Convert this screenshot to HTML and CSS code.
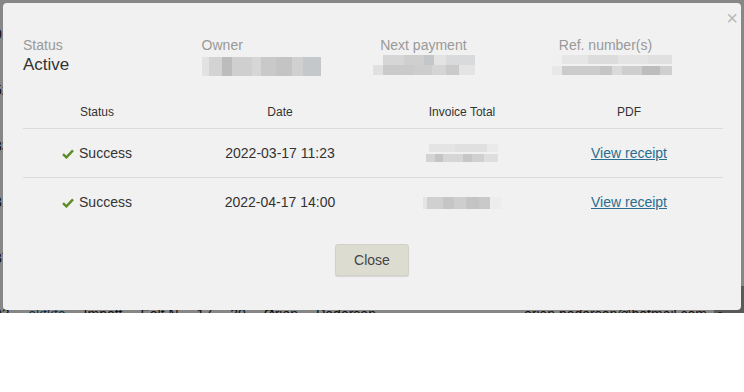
FILE: index.html
```html
<!DOCTYPE html>
<html lang="en">
<head>
<meta charset="UTF-8">
<meta name="viewport" content="width=device-width, initial-scale=1.0">
<title>Subscription payments</title>
<link rel="stylesheet" href="styles.css">
</head>
<body>
    <div class="screen">
        <!-- Page behind the dialog (only its edges show) -->
        <div class="page">
            <table class="bg-table">
                <tr><td class="c-id">01</td><td colspan="9"></td></tr>
                <tr><td class="c-id">52</td><td colspan="9"></td></tr>
                <tr><td class="c-id">33</td><td colspan="9"></td></tr>
                <tr><td class="c-id">31</td><td colspan="9"></td></tr>
                <tr><td class="c-id">37</td><td colspan="9"></td></tr>
                <tr><td class="c-id">03</td><td><a href="#">oktkto</a></td><td>Impott</td><td>Eolt N</td><td>17</td><td>30</td><td>Ørjan</td><td>Pedersen</td><td class="c-mail">orjan.pedersen@hotmail.com</td><td class="c-icon">&#9679;</td></tr>
            </table>
        </div>

        <div class="overlay"></div>

        <!-- Payments dialog -->
        <div class="modal" role="dialog">
            <span class="modal-close">&times;</span>

            <div class="summary">
                <div class="field">
                    <div class="field-label">Status</div>
                    <div class="field-value">Active</div>
                </div>
                <div class="field">
                    <div class="field-label">Owner</div>
                    <div class="field-value"><span class="mask mask-owner"></span></div>
                </div>
                <div class="field">
                    <div class="field-label">Next payment</div>
                    <div class="field-value"><span class="mask mask-next"></span></div>
                </div>
                <div class="field">
                    <div class="field-label">Ref. number(s)</div>
                    <div class="field-value"><span class="mask mask-ref"></span></div>
                </div>
            </div>

            <table class="payments">
                <colgroup>
                    <col class="col-status">
                    <col class="col-date">
                    <col class="col-total">
                    <col class="col-pdf">
                </colgroup>
                <thead>
                    <tr>
                        <th>Status</th>
                        <th>Date</th>
                        <th>Invoice Total</th>
                        <th>PDF</th>
                    </tr>
                </thead>
                <tbody>
                    <tr>
                        <td><svg class="check" width="12" height="10" viewBox="0 0 12 10"><path d="M1 5.2 L4.4 8.4 L11 1.4" fill="none" stroke="#5b8c25" stroke-width="2.4"/></svg>Success</td>
                        <td>2022-03-17 11:23</td>
                        <td><span class="mask mask-amount1"></span></td>
                        <td><a href="#" class="receipt">View receipt</a></td>
                    </tr>
                    <tr>
                        <td><svg class="check" width="12" height="10" viewBox="0 0 12 10"><path d="M1 5.2 L4.4 8.4 L11 1.4" fill="none" stroke="#5b8c25" stroke-width="2.4"/></svg>Success</td>
                        <td>2022-04-17 14:00</td>
                        <td><span class="mask mask-amount2"></span></td>
                        <td><a href="#" class="receipt">View receipt</a></td>
                    </tr>
                </tbody>
            </table>

            <div class="modal-footer">
                <button class="btn">Close</button>
            </div>
        </div>
    </div>
</body>
</html>
```

FILE: styles.css
```css
body {
    margin: 0;
    background-color: #fff;
    font-family: "Liberation Sans", Arial, sans-serif;
}
.screen {
    position: relative;
    height: 313px;
    overflow: hidden;
}

/* page behind the dialog */
.page {
    padding-top: 6px;
    margin-left: -6px;
}
.bg-table {
    border-collapse: collapse;
    font-size: 14px;
    color: #222;
}
.bg-table td {
    height: 56px;
    padding: 0 18px 0 0;
    white-space: nowrap;
}
.bg-table a {
    color: #1f5f8a;
}
.bg-table .c-id {
    width: 20px;
}
.bg-table .c-mail {
    padding-left: 130px;
    padding-right: 7px;
}
.bg-table .c-icon {
    width: 32px;
    background-color: #aaa;
    text-align: center;
}
.overlay {
    position: absolute;
    inset: 0;
    background-color: rgba(0, 0, 0, 0.47);
}

/* dialog */
.modal {
    position: absolute;
    left: 3px;
    top: 3px;
    width: 738px;
    height: 307px;
    box-sizing: border-box;
    padding: 34px 20px 0;
    background-color: #f1f1f1;
    border-radius: 4px;
    color: #333;
}
.modal-close {
    position: absolute;
    top: 5px;
    right: 3px;
    font-size: 20px;
    line-height: 20px;
    color: #b9b9b9;
}
.summary {
    display: grid;
    grid-template-columns: repeat(4, 178.6px);
}
.field-label {
    font-size: 14px;
    line-height: 16px;
    color: #999;
}
.field-value {
    margin-top: 2px;
    height: 20px;
    font-size: 17px;
    line-height: 20px;
    color: #333;
}

/* pixelated placeholders */
.mask {
    display: inline-block;
    vertical-align: top;
}
.mask-owner {
    width: 119px;
    height: 19px;
    margin-top: 2px;
    background: linear-gradient(90deg, #e2e2e2 0 6%, #d3d3d3 6% 17%, #bcbcbc 17% 25%, #cfcfcf 25% 42%, #d6d6d6 42% 50%, #c9c9c9 50% 62%, #c4c4c4 62% 76%, #d0d0d0 76% 85%, #c5c8cb 85% 100%);
}
.mask-next {
    width: 102px;
    height: 20px;
    margin-left: -7px;
    background-image:
        linear-gradient(90deg, #f1f1f1 0 10%, #d6d6d6 10% 30%, #cfcfcf 30% 50%, #c4c7c9 50% 60%, #e3e3e3 60% 72%, #d8dadc 72% 100%),
        linear-gradient(90deg, #e0e0e0 0 10%, #cacaca 10% 40%, #cdcdcd 40% 58%, #d5d5d5 58% 72%, #cacaca 72% 84%, #e4e4e4 84% 100%);
    background-size: 100% 50%;
    background-position: top, bottom;
    background-repeat: no-repeat;
}
.mask-ref {
    width: 120px;
    height: 20px;
    margin-left: -7px;
    background-image:
        linear-gradient(90deg, #f0f0f0 0 8%, #e6e6e6 8% 30%, #dcdcdc 30% 55%, #e4e4e4 55% 80%, #e0e0e0 80% 100%),
        linear-gradient(90deg, #e8e8e8 0 8%, #cbcbcb 8% 40%, #c5c5c5 40% 50%, #dadada 50% 58%, #cecece 58% 75%, #bdbdbd 75% 90%, #cfcfcf 90% 100%);
    background-size: 100% 45%;
    background-position: top, bottom;
    background-repeat: no-repeat;
}
.mask-amount1 {
    width: 72px;
    height: 18px;
    vertical-align: middle;
    background-image:
        linear-gradient(90deg, #f1f1f1 0 4%, #e4e4e4 4% 40%, #e0e0e0 40% 85%, #eaeaea 85% 100%),
        linear-gradient(90deg, #d4d4d4 0 12%, #c4c4c4 12% 24%, #d6d6d6 24% 52%, #c6c6c6 52% 64%, #d0d0d0 64% 80%, #dedede 80% 100%);
    background-size: 100% 45%;
    background-position: top, bottom;
    background-repeat: no-repeat;
}
.mask-amount2 {
    width: 78px;
    height: 12px;
    vertical-align: middle;
    background: linear-gradient(90deg, #e4e4e4 0 5%, #d0d0d0 5% 25%, #c6c6c6 25% 40%, #cecece 40% 55%, #c4c4c4 55% 72%, #c9c9c9 72% 86%, #ededed 86% 100%);
}

/* payments table */
.payments {
    width: 700px;
    margin-top: 20px;
    border-collapse: collapse;
    table-layout: fixed;
}
.col-status {
    width: 148px;
}
.col-date {
    width: 218px;
}
.col-total {
    width: 146px;
}
.col-pdf {
    width: 188px;
}
.payments th {
    height: 33px;
    padding: 0;
    font-size: 12px;
    font-weight: normal;
    color: #333;
    border-bottom: 1px solid #dcdcdc;
}
.payments td {
    height: 48px;
    padding: 0;
    font-size: 14px;
    text-align: center;
    color: #333;
}
.payments tbody tr:first-child td {
    border-bottom: 1px solid #dcdcdc;
}
.check {
    margin-right: 5px;
    vertical-align: -1px;
}
.receipt {
    color: #296e90;
}
.modal-footer {
    margin-top: 18px;
    text-align: center;
}
.btn {
    width: 74px;
    height: 32px;
    background-color: #dcdcd1;
    border: 1px solid #d2d2c8;
    border-radius: 3px;
    box-shadow: 0 1px 1px rgba(0, 0, 0, 0.12);
    font-family: "Liberation Sans", Arial, sans-serif;
    font-size: 14px;
    color: #444;
}
```
